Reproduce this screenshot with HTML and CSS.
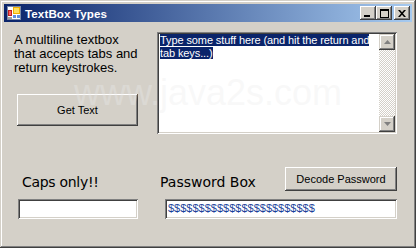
FILE: index.html
```html
<!DOCTYPE html>
<html lang="en">
<head>
  <meta charset="UTF-8">
  <title>TextBox Types</title>
  <link rel="stylesheet" href="styles.css">
</head>
<body>
  <div class="window">
    <div class="titlebar">
      <svg class="app-icon" width="14" height="14" viewBox="0 0 14 14">
        <rect x="0" y="0" width="14" height="14" fill="#7a8aa8"/>
        <rect x="1" y="1" width="12" height="12" fill="#ffffff"/>
        <rect x="1" y="4" width="4" height="6" fill="#c02020"/>
        <rect x="2" y="5" width="2" height="4" fill="#ff6060"/>
        <rect x="6" y="1" width="7" height="7" fill="#f0b000"/>
        <rect x="7" y="2" width="5" height="5" fill="#ffe060"/>
        <rect x="6" y="9" width="3" height="3" fill="#6090e0"/>
        <rect x="10" y="9" width="3" height="3" fill="#6090e0"/>
        <rect x="1" y="11" width="4" height="2" fill="#a0a0a0"/>
      </svg>
      <span class="title">TextBox Types</span>
      <div class="caption-buttons">
        <button class="cap-btn">
          <svg width="8" height="7" viewBox="0 0 8 7"><rect x="0" y="5" width="6" height="2" fill="#000"/></svg>
        </button>
        <button class="cap-btn">
          <svg width="9" height="9" viewBox="0 0 9 9"><path d="M0 0h9v9h-9z M1 2v6h7v-6z" fill="#000" fill-rule="evenodd"/></svg>
        </button>
        <button class="cap-btn close">
          <svg width="8" height="7" viewBox="0 0 8 7"><path d="M0 0h2l2 2.3 2-2.3h2l-3 3.5 3 3.5h-2l-2-2.3-2 2.3h-2l3-3.5z" fill="#000"/></svg>
        </button>
      </div>
    </div>

    <div class="client">
      <div class="top-row">
        <div class="left-col">
          <p class="intro">A multiline textbox<br>that accepts tabs and<br>return keystrokes.</p>
          <button class="win-btn get-text">Get Text</button>
        </div>
        <div class="memo">
          <div class="memo-text"><span class="sel">Type some stuff here (and hit the return and</span><br><span class="sel">tab keys...)</span></div>
          <div class="vscroll">
            <div class="arrow-btn">
              <svg width="7" height="4" viewBox="0 0 7 4"><path d="M3.5 0l3.5 4h-7z" fill="#808080"/></svg>
            </div>
            <div class="track"></div>
            <div class="arrow-btn">
              <svg width="7" height="4" viewBox="0 0 7 4"><path d="M0 0h7l-3.5 4z" fill="#808080"/></svg>
            </div>
          </div>
        </div>
      </div>

      <div class="bottom-row">
        <div class="caps-col">
          <div class="fancy-label caps-label">Caps only!!</div>
          <div class="textbox caps-box"></div>
        </div>
        <div class="pass-col">
          <div class="pass-head">
            <div class="fancy-label">Password Box</div>
            <button class="win-btn decode">Decode Password</button>
          </div>
          <div class="textbox pass-box">$$$$$$$$$$$$$$$$$$$$$$$$</div>
        </div>
      </div>
    </div>

    <div class="watermark">www.java2s.com</div>
  </div>
</body>
</html>
```

FILE: styles.css
```css
* {
  margin: 0;
  padding: 0;
  box-sizing: border-box;
}

body {
  font-family: 'Liberation Sans', Arial, sans-serif;
  background-color: #d4d0c8;
}

.window {
  position: relative;
  width: 416px;
  height: 248px;
  padding: 4px;
  background-color: #d4d0c8;
  box-shadow:
    inset -1px -1px #404040,
    inset 1px 1px #d4d0c8,
    inset -2px -2px #808080,
    inset 2px 2px #ffffff;
  overflow: hidden;
}

.titlebar {
  height: 18px;
  margin-bottom: 1px;
  display: flex;
  align-items: center;
  background: linear-gradient(to right, #0a246a, #a6caf0);
  color: #ffffff;
}

.app-icon {
  margin-left: 3px;
  margin-right: 4px;
}

.title {
  font-weight: bold;
  font-size: 11.6px;
  letter-spacing: 0.1px;
}

.caption-buttons {
  margin-left: auto;
  margin-right: 2px;
  display: flex;
}

.cap-btn {
  width: 16px;
  height: 14px;
  border: none;
  background-color: #d4d0c8;
  display: flex;
  align-items: center;
  justify-content: center;
  box-shadow:
    inset -1px -1px #404040,
    inset 1px 1px #ffffff,
    inset -2px -2px #808080,
    inset 2px 2px #d4d0c8;
}

.cap-btn.close {
  margin-left: 2px;
}

.client {
  padding: 9px 0 0 10px;
}

.top-row {
  display: flex;
}

.left-col {
  width: 143px;
}

.intro {
  margin-top: 1px;
  font-size: 13px;
  line-height: 14px;
  color: #000000;
}

.win-btn {
  border: none;
  background-color: #d4d0c8;
  font-family: 'Liberation Sans', Arial, sans-serif;
  font-size: 11px;
  color: #000000;
  box-shadow:
    inset -1px -1px #404040,
    inset 1px 1px #ffffff,
    inset -2px -2px #808080,
    inset 2px 2px #d4d0c8;
}

.get-text {
  margin-top: 19px;
  margin-left: 3px;
  width: 121px;
  height: 32px;
}

.memo {
  width: 240px;
  height: 102px;
  padding: 2px;
  display: flex;
  background-color: #ffffff;
  box-shadow:
    inset 1px 1px #808080,
    inset -1px -1px #ffffff,
    inset 2px 2px #404040,
    inset -2px -2px #d4d0c8;
}

.memo-text {
  flex: 1;
  padding-left: 1px;
  font-size: 11px;
  line-height: 13px;
  color: #000000;
  letter-spacing: -0.1px;
}

.sel {
  background-color: #0a246a;
  color: #ffffff;
}

.vscroll {
  width: 16px;
  display: flex;
  flex-direction: column;
}

.arrow-btn {
  height: 16px;
  display: flex;
  align-items: center;
  justify-content: center;
  background-color: #d4d0c8;
  box-shadow:
    inset -1px -1px #404040,
    inset 1px 1px #d4d0c8,
    inset -2px -2px #808080,
    inset 2px 2px #ffffff;
}

.track {
  flex: 1;
  background: repeating-conic-gradient(#ffffff 0 25%, #d4d0c8 0 50%) 0 0 / 2px 2px;
}

.bottom-row {
  margin-top: 33px;
  display: flex;
}

.caps-col {
  width: 146px;
  padding-left: 4px;
}

.fancy-label {
  margin-top: 7px;
  font-family: 'Comic Sans MS', 'DejaVu Sans', sans-serif;
  font-size: 14px;
  line-height: 16px;
  color: #000000;
  height: 24px;
}

.caps-label {
  margin-left: 4px;
  margin-bottom: 1px;
  letter-spacing: -0.3px;
}

.textbox {
  height: 20px;
  margin-top: 8px;
  padding: 3px 3px 0;
  background-color: #ffffff;
  font-size: 11px;
  line-height: 13px;
  box-shadow:
    inset 1px 1px #808080,
    inset -1px -1px #ffffff,
    inset 2px 2px #404040,
    inset -2px -2px #d4d0c8;
}

.caps-box {
  width: 120px;
  margin-top: 1px;
}

.pass-col {
  width: 237px;
}

.pass-head {
  display: flex;
  justify-content: space-between;
  align-items: flex-start;
  height: 24px;
}

.pass-head .fancy-label {
  margin-top: 7px;
}

.decode {
  width: 112px;
  height: 24px;
}

.pass-box {
  margin-left: 5px;
  width: 232px;
  color: #1a3f9a;
}

.watermark {
  position: absolute;
  left: 74px;
  top: 82px;
  height: 22px;
  font-size: 36px;
  line-height: 22px;
  color: rgba(235, 235, 235, 0.35);
  pointer-events: none;
  white-space: nowrap;
}
```
